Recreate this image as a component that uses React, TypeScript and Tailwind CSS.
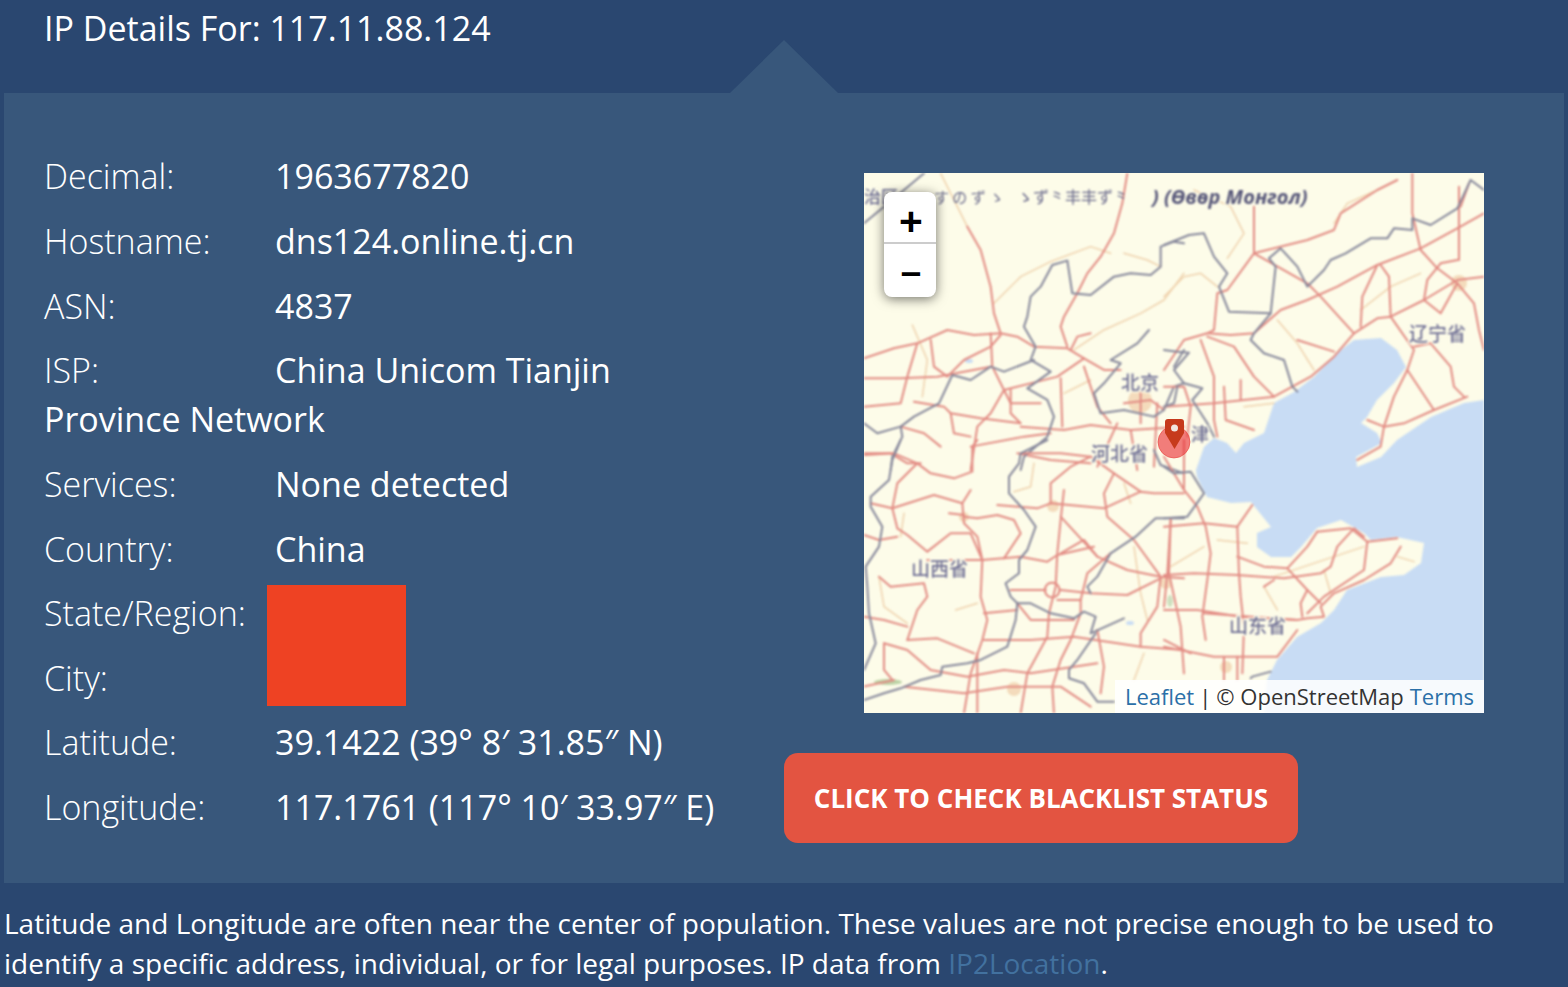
const rows = [
  { label: "Decimal:", value: "1963677820" },
  { label: "Hostname:", value: "dns124.online.tj.cn" },
  { label: "ASN:", value: "4837" },
  { label: "ISP:", value: "China Unicom Tianjin Province Network" },
  { label: "Services:", value: "None detected" },
  { label: "Country:", value: "China" },
  { label: "State/Region:", value: "Tianjin" },
  { label: "City:", value: "Tianjin" },
  { label: "Latitude:", value: "39.1422 (39° 8′ 31.85″ N)" },
  { label: "Longitude:", value: "117.1761 (117° 10′ 33.97″ E)" },
];

// each tile is traced in its own 3x coordinates, then scaled down
const tiles = [
  {
    at: "translate(0,-3) scale(0.3333)",
    roads: [
      "M790,10 L775,100 750,190 710,260 670,310 640,370 600,440 590,470 610,530",
      "M0,565 L90,535 160,520 250,480 330,495 410,490 460,500 510,530 610,535 660,565 720,600 770,600",
      "M0,625 L110,625 220,620 380,590",
      "M160,520 L130,620 110,700 0,710",
      "M200,510 L210,590 250,620 300,570 380,530 410,495",
      "M380,490 L385,590 420,660 380,730 340,770 320,900",
      "M310,170 L350,240 380,350 390,430 410,490",
      "M420,660 L580,620 660,565",
      "M420,660 L440,700 530,700",
      "M440,660 L440,730 470,760 350,745 260,730 240,710 150,695",
      "M260,730 L270,790 320,800",
      "M590,625 L595,770",
      "M470,770 L600,780 680,765 800,780 960,770",
      "M660,590 L700,710 740,760",
      "M320,830 L480,800 560,790",
      "M460,850 L560,870 680,880",
      "M110,770 L180,790 230,830",
      "M0,850 L80,850 130,880 170,880",
      "M620,540 L640,500 680,490",
      "M760,760 L700,890 M880,700 L870,890 M800,780 L820,900",
      "M780,700 L860,690 900,720 M830,670 L830,760",
    ],
    thin: [
      "M230,10 L310,170",
      "M390,400 L470,320 560,275 680,230 740,250",
      "M145,465 L190,570 175,680",
      "M780,250 L850,270 890,290",
      "M630,540 L720,480 830,430 900,390 960,310",
      "M600,670 L680,630",
    ],
    borders: [
      "M610,272 L565,285 530,350 500,380 490,440 480,470 515,530 500,570 560,605 490,655 550,690 570,740 550,800 480,860 470,900",
      "M510,570 L420,605 380,590 320,630 265,615 225,700 150,740 110,770 40,790 0,760",
      "M110,770 L115,800 85,860 80,900",
      "M610,272 L625,370 680,375 750,320 800,310 860,315 890,290 890,230 930,215 960,220",
      "M180,10 L60,110 0,160",
      "M855,480 L820,520 740,570 770,580 720,640 690,670 710,730 780,720 870,740 900,720 930,650 960,640",
      "M930,590 L960,540",
    ],
  },
  {
    at: "translate(300,-3) scale(0.3333)",
    roads: [
      "M745,10 L745,130 770,240 820,295 880,340 930,400 945,480 960,540",
      "M700,30 L640,60 530,130 510,180 430,210 270,250 270,110",
      "M270,250 L430,340 470,380 570,490",
      "M270,250 L190,360 160,370 150,480 130,490 60,510 0,600",
      "M130,490 L200,495 270,490 350,420 430,390 520,350 640,285 770,235 880,175 960,130",
      "M885,50 L885,270",
      "M915,40 L890,110",
      "M570,490 L640,445 680,440 780,390 880,330 960,320",
      "M640,285 L595,380 590,470",
      "M650,285 L675,320 680,440 750,540 730,600 690,680 660,770 650,830 580,870",
      "M730,600 L810,720",
      "M750,530 L800,520 860,590 870,650 900,680",
      "M660,770 L720,760 810,720 910,680",
      "M610,750 L660,770",
      "M130,500 L210,530 270,620 330,680",
      "M110,510 L150,620 150,750 160,800",
      "M0,710 L150,700 330,680 440,620 510,560 570,490",
      "M180,650 L185,750 270,780",
      "M230,630 L230,690",
      "M880,270 L830,280 790,330 780,390 830,430 880,340",
      "M400,510 L510,545",
      "M0,650 L60,650 80,710 70,800",
    ],
    thin: [
      "M90,60 L200,110 240,190 190,265",
      "M510,160 L550,100 640,60",
      "M0,380 L60,320 110,310 160,350",
      "M340,450 L400,520 450,600",
      "M240,710 L330,700",
      "M590,420 L680,350 770,310",
    ],
    borders: [
      "M0,225 L75,195 120,190 150,260 190,310 165,350 195,425 320,430 270,490 260,510 300,550 360,570 385,650 400,665",
      "M320,430 L335,290 315,265 350,235 400,290 430,350 480,300 500,270 545,250 620,205 670,205 690,175 745,180 745,145 800,165 880,115 920,30 960,60",
      "M0,540 L40,545 75,548 30,600 60,640 115,655 85,690 130,760 150,800",
      "M40,650 L30,700 0,710",
    ],
  },
  {
    at: "translate(0,267) scale(0.3333)",
    roads: [
      "M0,45 L90,40 160,70 200,100 270,115 325,95 325,20 340,0",
      "M160,70 L100,130 85,205 100,265 130,285 190,335 260,280 320,280 355,360",
      "M20,190 L85,205 210,165 295,190 320,150",
      "M295,190 L300,250 340,290 355,360 350,470 370,540 355,600 320,700 300,820",
      "M300,230 L340,235 400,225 450,240 470,280 420,355",
      "M255,220 L300,225",
      "M0,285 L45,300 100,290",
      "M190,360 L355,360 470,350 550,365 580,345 690,320",
      "M400,195 L520,205 560,190 720,205 830,155 870,160 960,160",
      "M470,40 L590,40 680,50 750,100 830,155",
      "M560,190 L560,130 620,80 680,50",
      "M600,150 L590,240 580,340 575,440 555,520 550,590 490,700 470,820",
      "M590,230 L700,350 790,390 890,410 960,415",
      "M700,350 L660,300 590,340",
      "M750,100 L720,160 730,230 810,300 890,410 880,500 830,580 830,620",
      "M440,450 L545,450 M590,450 L680,460 790,465 890,415",
      "M580,480 L650,480 670,400 740,340",
      "M650,480 L650,520 620,600 590,660 565,740 570,820",
      "M460,490 L500,540 630,540",
      "M360,600 L500,600 630,590 830,620 960,630",
      "M130,600 L220,595 330,640",
      "M340,640 L340,820",
      "M130,600 L160,510 190,470 180,430 80,440 45,410",
      "M0,530 L60,540 130,560",
      "M60,610 L60,690 85,720",
      "M60,610 L130,630 200,690 310,710 420,690 500,700 700,670",
      "M700,570 L720,680 710,760",
      "M120,740 L300,760 430,740 590,740 680,800",
      "M0,740 L90,720",
      "M360,520 L460,510",
      "M920,240 L915,400 950,560 960,700",
      "M565,428 A22,22 0 1 1 564,428",
    ],
    thin: [
      "M450,155 L500,140 510,70",
      "M120,220 L110,290",
      "M45,410 L60,500 130,550",
      "M275,510 L340,490",
      "M810,320 L830,460 850,540",
      "M780,130 L800,190",
      "M840,640 L810,720",
    ],
    borders: [
      "M110,0 L85,60 75,120 20,170 20,200 55,260 45,320 5,380 10,440 15,520 35,610 0,690",
      "M550,0 L470,40 465,70 435,110 435,160 480,210 515,260 490,330 465,360 465,400 425,430 440,470 460,490 455,540 430,620 350,660 310,670 235,680 230,705 170,720 110,745 60,760 0,780",
      "M460,490 L500,490 560,520 630,535 660,515 695,530 680,580 780,535",
      "M695,580 L640,660 615,690 615,715 660,730 700,785 750,785",
      "M680,460 L670,440 700,410 740,340 770,320 815,290 875,235 960,235",
      "M870,30 L890,75 960,100",
    ],
  },
  {
    at: "translate(300,267) scale(0.3333)",
    roads: [
      "M60,0 L60,150 100,200 125,260 140,340 130,420 115,530 125,600",
      "M0,260 L120,250 220,260 265,195",
      "M220,260 L225,400 230,470 240,560 235,700",
      "M20,240 L10,400 0,500",
      "M0,405 L90,400 220,405 360,415 470,400 500,380 520,320 570,265 600,290",
      "M220,350 L300,380 370,385 430,450 470,490",
      "M460,275 L560,265 610,305 700,295",
      "M460,275 L430,320 370,385",
      "M610,305 L600,390 480,470 430,520",
      "M710,320 L680,370 600,420 510,460 470,500 480,530 430,535 400,540 120,520",
      "M0,510 L100,510 230,530 400,540",
      "M430,450 L410,490 415,530",
      "M0,620 L150,650 340,650 400,570",
      "M180,650 L180,720 M220,650 L220,720",
      "M0,600 L80,640",
      "M0,50 L60,150",
      "M300,440 L330,420",
    ],
    thin: [
      "M20,380 L120,320",
      "M160,300 L250,310",
      "M300,440 L340,510",
      "M330,410 L600,320",
      "M700,350 L750,365",
      "M480,390 L500,460",
    ],
    borders: ["M0,80 L30,100 80,95 120,160 70,230 0,235", "M260,715 L265,710 320,695"],
  },
];

const seaPath =
  "M332,297 L340,274 350,265 363,270 372,280 380,270 400,260 410,230 430,219 450,204 473,180 490,167 517,165 533,177 542,194 530,210 513,227 503,244 497,250 513,260 518,270 492,284 493,294 517,284 533,267 567,244 600,230 620,227 L625,545 L400,545 403,507 413,487 433,464 457,450 470,437 483,417 517,404 540,402 557,390 560,370 533,364 507,367 500,360 477,347 453,355 437,374 427,384 407,384 393,374 393,360 407,354 387,329 367,330 343,324 333,304 Z";

// built-up patches of the bigger cities
const cities = [
  { x: 276, y: 228, r: 12 },
  { x: 595, y: 110, r: 8 },
  { x: 189, y: 333, r: 6 },
  { x: 100, y: 344, r: 5 },
  { x: 150, y: 516, r: 7 },
  { x: 302, y: 410, r: 6 },
  { x: 362, y: 494, r: 6 },
];

const labels = [
  { text: "北京", x: 257, y: 217, size: 19 },
  { text: "河北省", x: 227, y: 288, size: 19 },
  { text: "津", x: 327, y: 268, size: 18 },
  { text: "辽宁省", x: 545, y: 168, size: 19 },
  { text: "山西省", x: 47, y: 403, size: 19 },
  { text: "山东省", x: 365, y: 460, size: 19 },
  { text: "治区", x: 0, y: 30, size: 17 },
];

const MapTiles = () => {
  return (
    <svg viewBox="0 0 620 540" className="w-full h-full block blur-[0.9px]">
      <path d={seaPath} fill="#c8dcf4" />
      {/* a few greens and lakes */}
      <ellipse cx="306" cy="428" rx="3" ry="6" fill="#cfe0c0" />
      <ellipse cx="24" cy="509" rx="14" ry="3" fill="#bcd3a6" />
      <ellipse cx="266" cy="450" rx="4" ry="2" fill="#c8dcf4" />
      <ellipse cx="105" cy="188" rx="4" ry="2" fill="#c8dcf4" />
      {cities.map((c) => (
        <circle key={c.x} cx={c.x} cy={c.y} r={c.r} fill="#f0cda8" fillOpacity="0.7" />
      ))}
      {tiles.map((tile) => (
        <g key={tile.at} transform={tile.at} fill="none" strokeLinejoin="round" strokeLinecap="round">
          {tile.thin.map((d) => (
            <path key={d} d={d} stroke="#efd2ad" strokeWidth="4.5" />
          ))}
          {tile.roads.map((d) => (
            <path key={d} d={d} stroke="#e28a82" strokeWidth="6" />
          ))}
          {tile.borders.map((d) => (
            <path key={d} d={d} stroke="#85869a" strokeWidth="6" />
          ))}
        </g>
      ))}
      {labels.map((l) => (
        <text
          key={l.text}
          x={l.x}
          y={l.y}
          fontSize={l.size}
          fontWeight="500"
          fill="#6e6e94"
          stroke="#fdfce9"
          strokeWidth="3"
          paintOrder="stroke"
          style={{ fontFamily: '"Noto Sans CJK SC", sans-serif' }}
        >
          {l.text}
        </text>
      ))}
      <text x="70" y="30" fontSize="15" fill="#67678a" style={{ fontFamily: '"Noto Sans CJK JP", sans-serif' }}>
        す の ず ゝ
      </text>
      <text x="153" y="30" fontSize="16" fill="#67678a" style={{ fontFamily: '"Noto Sans CJK JP", sans-serif' }}>
        ゝず⺀丰丰ず⺀
      </text>
      <text
        x="288"
        y="31"
        fontSize="20"
        fontWeight="700"
        fontStyle="italic"
        fill="#575779"
        stroke="#fdfce9"
        strokeWidth="2.5"
        paintOrder="stroke"
        style={{ fontFamily: '"Open Sans", sans-serif' }}
      >
        ) (Өвөр Монгол)
      </text>
    </svg>
  );
};

const MapMarker = () => {
  return (
    <svg viewBox="0 0 620 540" className="absolute inset-0 w-full h-full">
      <circle cx="310" cy="269" r="16" fill="#ea2f35" fillOpacity="0.62" stroke="#e8453f" strokeOpacity="0.6" strokeWidth="1" />
      <path d="M301,249 Q301,246 304,246 L317,246 Q320,246 320,249 L320,260 L310.5,276 L301,260 Z" fill="#c63a1c" />
      <circle cx="310.5" cy="255" r="3.5" fill="#f1e6e0" />
    </svg>
  );
};

const LeafletMap = () => {
  return (
    <div className="relative w-[620px] h-[540px] overflow-hidden bg-[#fdfce9]">
      <MapTiles />
      <MapMarker />

      {/* Zoom control */}
      <div className="absolute left-5 top-[19px] w-[52px] h-[105px] rounded-lg bg-white shadow-[0_2px_12px_rgba(0,0,0,0.55)] flex flex-col font-['DejaVu_Sans_Mono',monospace] font-bold text-black">
        <div className="h-[52px] pt-2 pl-0.5 flex items-center justify-center border-b-2 border-[#cccccc] text-[38px] leading-none">+</div>
        <div className="flex-1 pt-1 pl-0.5 flex items-center justify-center text-[34px] leading-none">−</div>
      </div>

      {/* Attribution */}
      <div className="absolute right-0 bottom-0 h-[33px] px-2.5 bg-white/85 flex items-center text-[22px] text-[#333333] whitespace-nowrap">
        <a className="text-[#2b70a8]">Leaflet</a>
        <span className="mx-[5px]">|</span>
        <span>© OpenStreetMap</span>
        <a className="ml-[6px] text-[#2b70a8]">Terms</a>
      </div>
    </div>
  );
};

export default function App() {
  return (
    <div className="relative w-[1568px] h-[987px] overflow-hidden bg-[#2a4770] text-white font-['Open_Sans','Noto_Sans',sans-serif]">
      {/* Heading */}
      <div className="h-[93px] pl-11">
        <h1 className="text-[34px] leading-[56px] font-normal">IP Details For: 117.11.88.124</h1>
      </div>
      <div className="absolute left-[730px] top-10 w-[108px] h-[53px] bg-[#38577b] [clip-path:polygon(50%_0,100%_100%,0_100%)]" />

      {/* Panel */}
      <div className="mx-1 h-[790px] bg-[#38577b] flex">
        <div className="relative w-[780px] shrink-0 pl-10 pr-10 pt-[59.3px] text-[34px] leading-[49px]">
          {rows.map((row) => (
            <p key={row.label} className="mb-[15.65px]">
              <span className="inline-block w-[231px] font-light">{row.label}</span>
              {row.value}
            </p>
          ))}
          {/* redacted block over the region and city */}
          <div className="absolute left-[263px] top-[492px] w-[139px] h-[121px] bg-[#ee4223]" />
        </div>

        <div className="flex-1 pt-20">
          <div className="flex justify-center">
            <LeafletMap />
          </div>
          <a className="mt-10 w-[514px] h-[90px] rounded-[14px] bg-[#e35441] flex items-center justify-center text-[26px] font-bold uppercase">
            Click to check blacklist status
          </a>
        </div>
      </div>

      {/* Footnote */}
      <p className="pt-5 pl-1 pr-5 text-[28px] leading-10">
        Latitude and Longitude are often near the center of population. These values are not precise enough to be used to identify a specific address, individual, or for legal purposes. IP data from{" "}
        <a className="text-[#42719f]">IP2Location</a>.
      </p>
    </div>
  );
}
